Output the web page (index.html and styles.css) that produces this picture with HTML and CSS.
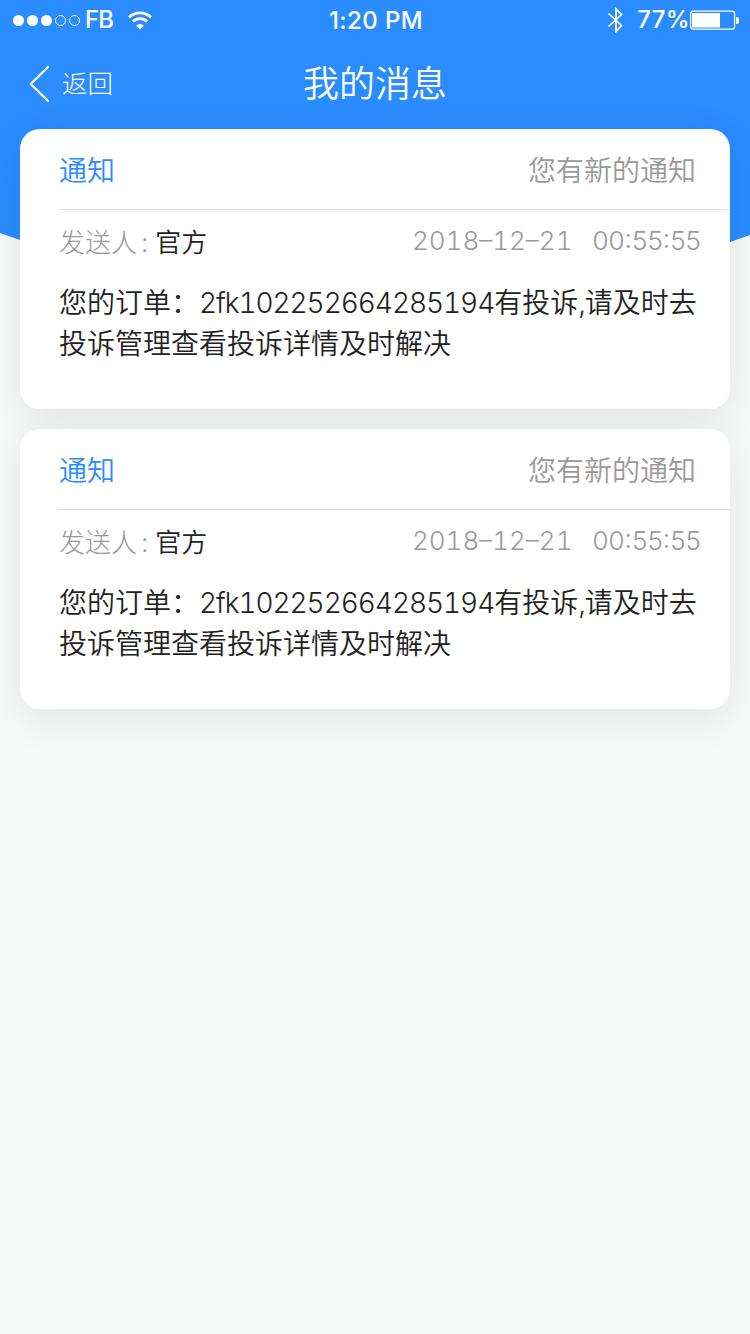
FILE: index.html
```html
<!DOCTYPE html>
<html lang="zh-CN">
<head>
<meta charset="utf-8">
<title>我的消息</title>
<link rel="stylesheet" href="styles.css">
</head>
<body>

<div class="top-bg"></div>

<div class="page">
  <div class="status-bar">
    <div class="status-left">
      <div class="signal">
        <i class="dot"></i>
        <i class="dot"></i>
        <i class="dot"></i>
        <i class="dot empty"></i>
        <i class="dot empty"></i>
      </div>
      <span class="carrier">FB</span>
      <svg class="wifi" width="24" height="19" viewBox="0 0 24 19" fill="none" stroke="#fff" stroke-width="2.8">
        <path d="M1 6.3a15.8 15.8 0 0 1 22 0"/>
        <path d="M4.8 10.5a10.4 10.4 0 0 1 14.4 0"/>
        <path d="M8.1 14.6a5.8 5.8 0 0 1 7.8 0L12 18.6z" fill="#fff" stroke="none"/>
      </svg>
    </div>
    <span class="time">1:20 PM</span>
    <div class="status-right">
      <svg class="bluetooth" width="16" height="26" viewBox="0 0 16 26" fill="none" stroke="#fff" stroke-width="1.7">
        <path d="M1.500 6.500L14.500 18.500L9 24.500V2L14.500 7.500L1.500 19.500"/>
      </svg>
      <span class="percent">77%</span>
      <svg class="battery" width="49" height="20" viewBox="0 0 49 20">
        <rect x="0.6" y="1.1" width="44" height="18" rx="2.5" fill="none" stroke="#fff" stroke-width="1.2"/>
        <rect x="2" y="3" width="28" height="14.5" fill="#fff"/>
        <path d="M46 7h1a2 2 0 0 1 2 2v3a2 2 0 0 1-2 2h-1z" fill="#fff"/>
      </svg>
    </div>
  </div>

  <div class="nav-bar">
    <a class="back">
      <svg width="22" height="38" viewBox="0 0 22 38" fill="none" stroke="#fff" stroke-width="2.2" stroke-linecap="round" stroke-linejoin="round">
        <path d="M20 3L2.7 20L20 37"/>
      </svg>
      <span>返回</span>
    </a>
    <h1 class="title">我的消息</h1>
  </div>

  <div class="list">
    <div class="card">
      <div class="card-head">
        <span class="type">通知</span>
        <span class="summary">您有新的通知</span>
      </div>
      <div class="card-info">
        <span class="sender">发送人<span class="colon">:</span><b>官方</b></span>
        <span class="date">2018–12–21</span>
        <span class="clock">00:55:55</span>
      </div>
      <p class="message">您的订单：<span class="order">2fk102252664285194</span>有投诉<span class="comma">,</span>请及时去投诉管理查看投诉详情及时解决</p>
    </div>

    <div class="card">
      <div class="card-head">
        <span class="type">通知</span>
        <span class="summary">您有新的通知</span>
      </div>
      <div class="card-info">
        <span class="sender">发送人<span class="colon">:</span><b>官方</b></span>
        <span class="date">2018–12–21</span>
        <span class="clock">00:55:55</span>
      </div>
      <p class="message">您的订单：<span class="order">2fk102252664285194</span>有投诉<span class="comma">,</span>请及时去投诉管理查看投诉详情及时解决</p>
    </div>
  </div>
</div>

</body>
</html>
```
FILE: styles.css
```css
* {
  box-sizing: border-box;
}

body {
  margin: 0;
  min-height: 1334px;
  background-color: #f8faf9;
  font-family: Inter, "Noto Sans CJK SC", sans-serif;
  font-weight: 300;
  color: #222;
}

/* blue backdrop that runs behind the first card */
.top-bg {
  position: absolute;
  top: 0;
  left: 0;
  width: 100%;
  height: 300px;
  background-color: #2a8cff;
  clip-path: polygon(0 0, 100% 0, 100% 235px, 730px 242px, 560px 290px, 190px 290px, 20px 240px, 0 233px);
}

.page {
  position: relative;
}

.status-bar {
  display: grid;
  grid-template-columns: 1fr auto 1fr;
  align-items: center;
  height: 40px;
  padding: 0 11px 0 13px;
  color: #fff;
  font-size: 24px;
  font-weight: 450;
}

.status-left,
.status-right {
  display: flex;
  align-items: center;
}

.status-right {
  justify-content: flex-end;
}

.signal {
  display: flex;
  gap: 3px;
}

.dot {
  width: 11px;
  height: 11px;
  border-radius: 50%;
  background-color: #fff;
}

.dot.empty {
  background-color: transparent;
  border: 1px solid #fff;
}

.carrier {
  margin-left: 5px;
  padding-bottom: 1px;
  letter-spacing: -0.8px;
}

.wifi {
  margin-left: 15px;
}

.time {
  letter-spacing: 0.4px;
}

.percent {
  margin-left: 14px;
  padding-bottom: 1px;
  letter-spacing: 0.3px;
}

.nav-bar {
  display: grid;
  grid-template-columns: 1fr auto 1fr;
  align-items: center;
  height: 89px;
  padding: 0 28px 3px;
  color: #fff;
}

.back {
  display: flex;
  align-items: center;
  gap: 12px;
  font-size: 25.5px;
}

.back span {
  padding-bottom: 3px;
}

.title {
  margin: 0;
  padding-bottom: 4px;
  font-size: 36px;
  font-weight: 350;
}

.list {
  display: flex;
  flex-direction: column;
  gap: 20px;
  padding: 0 20px;
}

.card {
  height: 280px;
  padding-left: 39px;
  border-radius: 20px;
  background-color: #fff;
  box-shadow: 0 10px 40px rgba(0, 0, 0, 0.09);
}

.card-head {
  display: flex;
  justify-content: space-between;
  align-items: center;
  height: 81px;
  padding-right: 34px;
  border-bottom: 1px solid #ddd;
  font-size: 28px;
}

.type {
  color: #2a8cff;
  font-weight: 350;
}

.summary {
  color: #999;
  font-weight: 350;
}

.card-info {
  display: flex;
  align-items: center;
  height: 61px;
  padding-right: 29px;
  color: #999;
  font-size: 26px;
}

.sender b {
  color: #222;
  font-weight: 350;
}

.colon {
  margin: 0 7px 0 4px;
}

.date {
  margin-left: auto;
  font-variant-numeric: tabular-nums;
}

.clock {
  margin-left: 20px;
}

.message {
  margin: 12px 0 0;
  padding-right: 30px;
  font-size: 28px;
  font-weight: 350;
  line-height: 41px;
}

.order {
  font-weight: 300;
  font-variant-numeric: tabular-nums;
  letter-spacing: -1.06px;
}

.comma {
  letter-spacing: -1.5px;
}
```
